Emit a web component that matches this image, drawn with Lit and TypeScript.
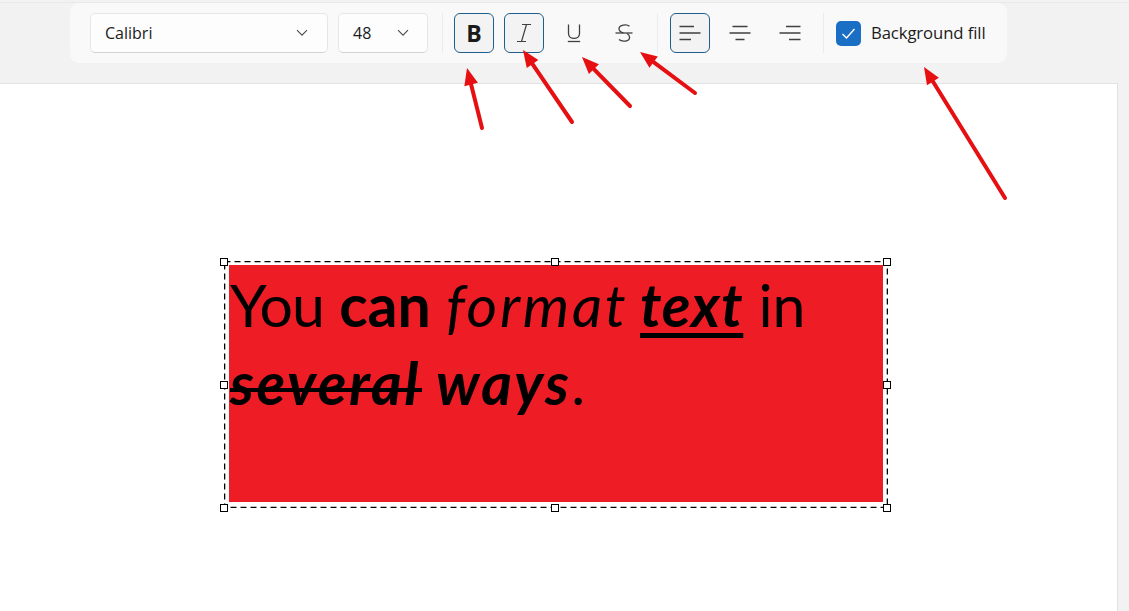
import { LitElement, html, css, svg } from "lit";
import { customElement } from "lit/decorators.js";

const chevron = html`<svg class="chev" width="12" height="8" viewBox="0 0 12 8"><path d="M1 1.2 L6 6.2 L11 1.2" fill="none" stroke="#4a4a4a" stroke-width="1.1"/></svg>`;
const iIcon = html`<svg width="20" height="20" viewBox="0 0 20 20" fill="none" stroke="#404040" stroke-width="1.2"><path d="M8 1.5H17M12.5 1.5 L7.5 18.5M3 18.5H12"/></svg>`;
const uIcon = html`<svg width="20" height="20" viewBox="0 0 20 20" fill="none" stroke="#404040" stroke-width="1.3"><path d="M4.5 1.5V10.5C4.5 17 15.5 17 15.5 10.5V1.5"/><path d="M3.8 18.5H16.2"/></svg>`;
const sIcon = html`<svg width="20" height="20" viewBox="0 0 20 20" fill="none" stroke="#404040" stroke-width="1.3"><path d="M15.5 3.2C13 1 5 1.4 5 5.8 5 8.2 7 9.3 9.5 9.9"/><path d="M1.5 10H18.5"/><path d="M13 10.5C15 11.6 15.6 13 15.6 14.4 15.6 18.6 8 19.2 5 16.6"/></svg>`;
const align = (a: number, b: number, c: number, d: number) =>
  html`<svg width="22" height="20" viewBox="0 0 22 20" stroke="#404040" stroke-width="1.4" fill="none"><path d="M${a} 3.5H${b}M0.5 10H21.5M${c} 16.5H${d}"/></svg>`;

const arrows: [number, number, number, number][] = [
  [482, 128, 467, 68],
  [572, 122, 523, 50],
  [630, 106, 582, 57],
  [695, 93, 640, 52],
  [1005, 198, 924, 67],
];

@customElement("app-root")
export class AppRoot extends LitElement {
  static styles = css`
    :host { display: block; position: relative; width: 1129px; height: 611px; overflow: hidden; background: #f2f2f2; font-family: "Open Sans", "Noto Sans", sans-serif; color: #1b1b1b; }
    .top { margin-top: 2px; height: 81px; box-sizing: border-box; padding: 0 0 0 70px; border-top: 1px solid #e9e9e9; }
    .bar { width: 937px; height: 60px; box-sizing: border-box; background: #f9f9f9; border-radius: 9px; padding: 10px 20px; display: flex; align-items: center; }
    .select { height: 40px; box-sizing: border-box; background: #fdfdfd; border: 1px solid #e6e6e6; border-bottom-color: #d2d2d2; border-radius: 5px; display: flex; align-items: center; justify-content: space-between; padding: 0 19px 0 14px; font-size: 16px; }
    .font { width: 238px; margin-right: 10px; }
    .size { width: 90px; padding-right: 18px; }
    .chev { flex: none; }
    .sep { width: 1px; height: 40px; background: #ececec; flex: none; }
    .s1 { margin: 0 11px 0 14px; }
    .s2 { margin: 0 12px 0 13px; }
    .s3 { margin: 0 12px 0 13px; }
    .btn { width: 40px; height: 40px; box-sizing: border-box; border: 1px solid transparent; border-radius: 6px; display: flex; align-items: center; justify-content: center; margin-right: 10px; flex: none; }
    .btn.last { margin-right: 0; }
    .btn.on { background: #f3f3f3; border-color: #1f5f8b; }
    .b { font-weight: 700; font-size: 23px; line-height: 1; color: #1a1a1a; }
    .check { display: flex; align-items: center; gap: 10px; font-size: 16.7px; letter-spacing: -0.1px; }
    .check span { margin-bottom: 2px; }
    .box { width: 25px; height: 25px; border-radius: 5px; background: #1a6fc4; display: flex; align-items: center; justify-content: center; }
    .canvas { width: 1118px; height: 528px; box-sizing: border-box; background: #fff; border-top: 1px solid #e3e3e3; border-right: 1px solid #e3e3e3; padding: 177px 0 0 224px; }
    .sel { position: relative; width: 664px; height: 247px; box-sizing: border-box; padding: 4px 5px 6px 5px; }
    .dash { position: absolute; left: 0; top: 0; width: 664px; height: 247px; }
    .h { position: absolute; width: 6px; height: 6px; background: #fff; border: 1.5px solid #000; margin: -4px 0 0 -5px; }
    .fill { height: 100%; background: #ee1c25; box-sizing: border-box; padding: 1px 0 0 1px; font-family: "Lato", "Carlito", sans-serif; font-size: 59px; line-height: 78px; color: #000; white-space: nowrap; overflow: hidden; }
    .you { letter-spacing: -0.9px; }
    .fill b { font-weight: 700; letter-spacing: 0; }
    .fill i { font-weight: 400; letter-spacing: 2.7px; margin-right: -3.5px; }
    .bi { font-weight: 700; font-style: italic; }
    .u { letter-spacing: 0.8px; text-decoration: underline; text-decoration-thickness: 5px; text-underline-offset: 6px; }
    .st { position: relative; letter-spacing: 2.5px; }
    .st::after { content: ""; position: absolute; left: 0; right: -1px; top: 41px; height: 4px; background: #000; }
    .ways { letter-spacing: 2.3px; }
    .arrows { position: absolute; left: 0; top: 0; pointer-events: none; }
  `;

  render() {
    const hs = [[0.5, 0.5], [332, 0.5], [663.5, 0.5], [0.5, 123.5], [663.5, 123.5], [0.5, 246.5], [332, 246.5], [663.5, 246.5]];
    return html`
      <div class="top">
        <div class="bar">
          <div class="select font"><span>Calibri</span>${chevron}</div>
          <div class="select size"><span>48</span>${chevron}</div>
          <div class="sep s1"></div>
          <div class="btn on"><span class="b">B</span></div>
          <div class="btn on">${iIcon}</div>
          <div class="btn">${uIcon}</div>
          <div class="btn last">${sIcon}</div>
          <div class="sep s2"></div>
          <div class="btn on">${align(0.5, 15, 0.5, 12)}</div>
          <div class="btn">${align(3.5, 18.5, 6.5, 15.5)}</div>
          <div class="btn last">${align(7, 21.5, 10, 21.5)}</div>
          <div class="sep s3"></div>
          <div class="check">
            <div class="box"><svg width="15" height="13" viewBox="0 0 15 13" fill="none" stroke="#fff" stroke-width="1.4"><path d="M1.5 7 L5.5 11 L13.5 2"/></svg></div>
            <span>Background fill</span>
          </div>
        </div>
      </div>
      <div class="canvas">
        <div class="sel">
          <div class="fill"><span class="you">You</span> <b>can</b> <i>format</i> <span class="bi u">text</span> in<br /><span class="bi st">several</span> <span class="bi ways">ways</span>.</div>
          <svg class="dash" viewBox="0 0 664 247" fill="none"><rect x="0.5" y="0.5" width="663" height="246" stroke="#000" stroke-width="1.6" stroke-dasharray="6 4"/></svg>
          ${hs.map(([x, y]) => html`<div class="h" style="left:${x}px;top:${y}px"></div>`)}
        </div>
      </div>
      <svg class="arrows" width="1129" height="611" viewBox="0 0 1129 611">
        ${arrows.map(([x1, y1, x2, y2]) => {
          const d = Math.hypot(x2 - x1, y2 - y1);
          const ux = (x2 - x1) / d, uy = (y2 - y1) / d;
          const bx = x2 - ux * 17, by = y2 - uy * 17;
          const nx = -uy * 7, ny = ux * 7;
          return svg`<line x1=${x1} y1=${y1} x2=${bx} y2=${by} stroke="#e60f12" stroke-width="4" stroke-linecap="round"/><polygon points="${x2},${y2} ${bx + nx},${by + ny} ${bx - nx},${by - ny}" fill="#e60f12"/>`;
        })}
      </svg>
    `;
  }
}
